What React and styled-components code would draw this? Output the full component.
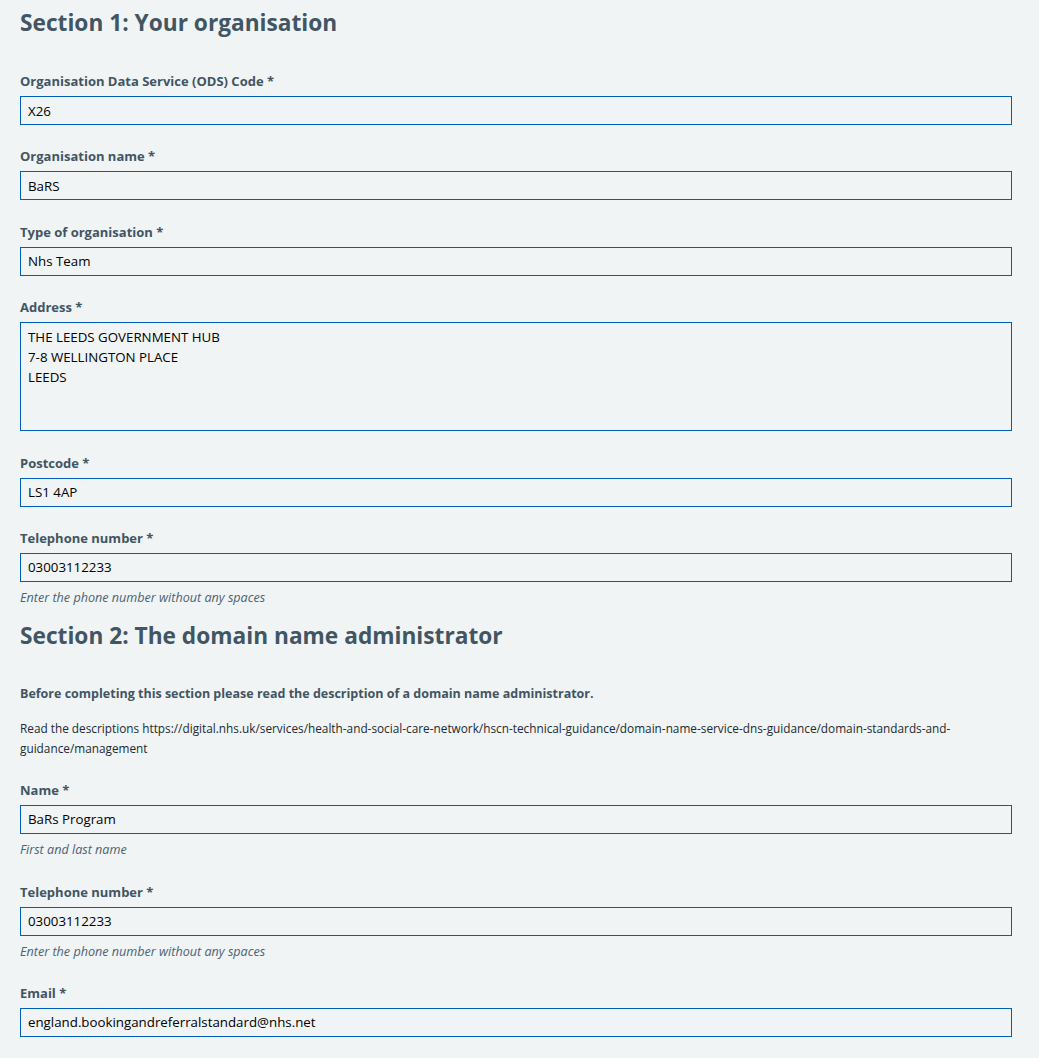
import styled, { createGlobalStyle } from "styled-components";

const GlobalStyle = createGlobalStyle`
  html, body {
    margin: 0;
    padding: 0;
    background: #f0f4f5;
  }
  body {
    font-family: "Open Sans", "Noto Sans", sans-serif;
    color: #212b32;
  }
`;

const Page = styled.div`
  padding: 7px 27px 20px 20px;
  background: #f0f4f5;
  min-height: 100vh;
  box-sizing: border-box;
`;

const Heading = styled.h2`
  margin: 0 0 ${(p) => p.$bottom || 0}px;
  font-size: 22.7px;
  line-height: 32px;
  font-weight: 700;
  color: #425563;
`;

const Field = styled.div`
  display: flex;
  flex-direction: column;
  margin-bottom: ${(p) => (p.$last ? 0 : 22.4)}px;
`;

const Label = styled.label`
  font-size: 13px;
  line-height: 18px;
  font-weight: 700;
  color: #425563;
  margin-bottom: 6px;
`;

const Input = styled.input`
  box-sizing: border-box;
  width: 100%;
  height: 29px;
  padding: 0 7px;
  border: 1px solid #005eb8;
  border-radius: 0;
  background: #f0f4f5;
  font-family: inherit;
  font-size: 13.3px;
  color: #000;
  outline: none;
`;

const TextArea = styled.textarea`
  box-sizing: border-box;
  width: 100%;
  height: 109px;
  padding: 4px 7px;
  border: 1px solid #005eb8;
  border-radius: 0;
  background: #f0f4f5;
  font-family: inherit;
  font-size: 13.3px;
  line-height: 20px;
  color: #000;
  resize: none;
  outline: none;
`;

const Hint = styled.span`
  margin-top: 8px;
  font-size: 12.6px;
  line-height: 16px;
  font-style: italic;
  color: #4c6272;
`;

const Intro = styled.p`
  margin: 0 0 15px;
  font-size: 12.5px;
  line-height: 18px;
  font-weight: 700;
  color: #425563;
`;

const Note = styled.p`
  margin: 0 0 23px;
  font-size: 11.8px;
  line-height: 20px;
  color: #212b32;
  word-break: break-word;
`;

const TextField = ({ label, value, hint, last, gap }) => (
  <Field $last={last} style={gap !== undefined ? { marginBottom: gap } : undefined}>
    <Label>{label}</Label>
    <Input value={value} readOnly />
    {hint && <Hint>{hint}</Hint>}
  </Field>
);

export default function App() {
  return (
    <Page>
      <GlobalStyle />
      <Heading $bottom={33}>Section 1: Your organisation</Heading>

      <TextField label="Organisation Data Service (ODS) Code *" value="X26" />
      <TextField label="Organisation name *" value="BaRS" />
      <TextField label="Type of organisation *" value="Nhs Team" />
      <Field>
        <Label>Address *</Label>
        <TextArea
          readOnly
          value={"THE LEEDS GOVERNMENT HUB\n7-8 WELLINGTON PLACE\nLEEDS"}
        />
      </Field>
      <TextField label="Postcode *" value="LS1 4AP" />
      <TextField
        label="Telephone number *"
        value="03003112233"
        hint="Enter the phone number without any spaces"
        gap={14}
      />

      <Heading $bottom={33}>Section 2: The domain name administrator</Heading>
      <Intro>
        Before completing this section please read the description of a domain
        name administrator.
      </Intro>
      <Note>
        Read the descriptions
        https://digital.nhs.uk/services/health-and-social-care-network/hscn-technical-guidance/domain-name-service-dns-guidance/domain-standards-and-guidance/management
      </Note>

      <TextField
        label="Name *"
        value="BaRs Program"
        hint="First and last name"
        gap={25}
      />
      <TextField
        label="Telephone number *"
        value="03003112233"
        hint="Enter the phone number without any spaces"
        gap={24}
      />
      <TextField
        label="Email *"
        value="england.bookingandreferralstandard@nhs.net"
        last
      />
    </Page>
  );
}
